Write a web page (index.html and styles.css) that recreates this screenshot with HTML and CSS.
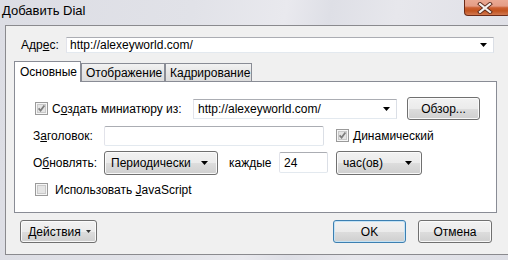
FILE: index.html
```html
<!DOCTYPE html>
<html lang="ru">
<head>
<meta charset="utf-8">
<title>Добавить Dial</title>
<link rel="stylesheet" href="styles.css">
</head>
<body>
<div class="window">
  <div class="titlebar">
    <span class="title">Добавить Dial</span>
    <div class="close">
      <svg width="16" height="12" viewBox="0 0 16 12">
        <path d="M3 2 L13 10 M13 2 L3 10" stroke="#5b2a1c" stroke-width="4" stroke-linecap="square" fill="none"/>
        <path d="M3 2 L13 10 M13 2 L3 10" stroke="#f4f1ee" stroke-width="2.2" stroke-linecap="square" fill="none"/>
      </svg>
    </div>
  </div>
  <div class="frame">
    <div class="client">
      <div class="addr-row">
        <span class="addr-label">Адр<u>е</u>с:</span>
        <div class="edit-combo addr-input">
          <span class="val">http://alexeyworld.com/</span>
          <svg class="arrow" width="7" height="4" viewBox="0 0 7 4"><path d="M0 0H7L3.5 4Z" fill="#000"/></svg>
        </div>
      </div>
      <div class="tabs">
        <div class="tab active">Основные</div>
        <div class="tab t2">Отображение</div>
        <div class="tab t3">Кадрирование</div>
      </div>
      <div class="panel">
        <div class="row">
          <span class="check"><svg width="13" height="13" viewBox="0 0 13 13"><rect x="0.5" y="0.5" width="12" height="12" fill="#f6f6f6" stroke="#9a9a9a"/><rect x="2.5" y="2.5" width="8" height="8" fill="#e4e4e4" stroke="#c9c9c9"/><path d="M3.6 6.4 L5.6 8.6 L9.4 3.4" stroke="#7d7d7d" stroke-width="1.7" fill="none"/></svg></span>
          <span class="cb-label thumb-label">С<u>о</u>здать миниатюру из:</span>
          <div class="edit-combo thumb-input">
            <span class="val">http://alexeyworld.com/</span>
            <svg class="arrow" width="7" height="4" viewBox="0 0 7 4"><path d="M0 0H7L3.5 4Z" fill="#000"/></svg>
          </div>
          <button class="btn browse">Обзор...</button>
        </div>
        <div class="row">
          <span class="lbl">З<u>а</u>головок:</span>
          <div class="edit title-input"></div>
          <span class="check dyn-check"><svg width="13" height="13" viewBox="0 0 13 13"><rect x="0.5" y="0.5" width="12" height="12" fill="#f6f6f6" stroke="#9a9a9a"/><rect x="2.5" y="2.5" width="8" height="8" fill="#e4e4e4" stroke="#c9c9c9"/><path d="M3.6 6.4 L5.6 8.6 L9.4 3.4" stroke="#7d7d7d" stroke-width="1.7" fill="none"/></svg></span>
          <span class="cb-label"><u>Д</u>инамический</span>
        </div>
        <div class="row">
          <span class="lbl">О<u>б</u>новлять:</span>
          <button class="btn combo period">Периодически<svg class="arrow" width="7" height="4" viewBox="0 0 7 4"><path d="M0 0H7L3.5 4Z" fill="#000"/></svg></button>
          <span class="every">каждые</span>
          <div class="edit num-input">24</div>
          <button class="btn combo unit">час(ов)<svg class="arrow" width="7" height="4" viewBox="0 0 7 4"><path d="M0 0H7L3.5 4Z" fill="#000"/></svg></button>
        </div>
        <div class="row">
          <span class="check"><svg width="13" height="13" viewBox="0 0 13 13"><rect x="0.5" y="0.5" width="12" height="12" fill="#f6f6f6" stroke="#9a9a9a"/><rect x="2.5" y="2.5" width="8" height="8" fill="#e4e4e4" stroke="#c9c9c9"/></svg></span>
          <span class="cb-label js-label">Использовать <u>J</u>avaScript</span>
        </div>
      </div>
      <div class="buttons">
        <button class="btn actions">Действия<svg class="small-arrow" width="5" height="3" viewBox="0 0 5 3"><path d="M0 0H5L2.5 3Z" fill="#333"/></svg></button>
        <div class="spacer"></div>
        <button class="btn default ok">OK</button>
        <button class="btn cancel">Отмена</button>
      </div>
    </div>
  </div>
</div>
</body>
</html>
```

FILE: styles.css
```css
html, body {
  margin: 0;
  padding: 0;
  width: 508px;
  height: 260px;
  overflow: hidden;
}

body {
  font-family: "Liberation Sans", Arial, sans-serif;
  font-size: 12px;
  color: #000;
  background: linear-gradient(100deg, #dcdde4 0%, #e1e2e8 35%, #e9e9ee 52%, #dedfe6 60%, #e7e7ec 72%, #dddee5 100%);
}

.window {
  width: 508px;
  height: 260px;
  display: flex;
  flex-direction: column;
}

.titlebar {
  height: 25px;
  flex: none;
  display: flex;
  justify-content: space-between;
  align-items: flex-start;
  overflow: hidden;
}

.title {
  padding-left: 2px;
  padding-top: 3px;
  font-size: 13px;
  line-height: 16px;
  color: #000;
}

.close {
  width: 46px;
  height: 16px;
  margin-right: -2px;
  box-sizing: border-box;
  border: 1px solid #6b2a17;
  border-top: none;
  border-radius: 0 0 4px 4px;
  background: linear-gradient(#eaa993 0%, #e49d86 40%, #cc5f31 52%, #c1531f 72%, #d27951 100%);
  display: flex;
  justify-content: center;
  align-items: center;
  padding-right: 4px;
}

.frame {
  flex: 1;
  padding-left: 5px;
  padding-bottom: 5px;
  display: flex;
}

.client {
  flex: 1;
  background: #f0f0f0;
  border: 1px solid #8a8a8e;
  border-right: none;
  display: flex;
  flex-direction: column;
  padding: 11px 11px 10px 8px;
}

/* address row */
.addr-row {
  display: flex;
  align-items: center;
  height: 16px;
  padding-left: 7px;
  padding-right: 3px;
}

.addr-label {
  width: 45px;
  flex: none;
}

.edit-combo {
  box-sizing: border-box;
  background: #fff;
  border: 1px solid;
  border-color: #abadb3 #dbdfe6 #e3e9ef #e2e3ea;
  display: flex;
  align-items: center;
  padding-left: 3px;
  padding-right: 6px;
}

.edit-combo .val {
  flex: 1;
}

.addr-input {
  flex: 1;
  height: 16px;
}

.arrow {
  flex: none;
}

/* tabs */
.tabs {
  display: flex;
  align-items: flex-end;
  margin-top: 8px;
  margin-bottom: -1px;
  position: relative;
  z-index: 1;
}

.tab {
  box-sizing: border-box;
  height: 18px;
  margin-bottom: 1px;
  border: 1px solid #898c95;
  border-bottom: none;
  background: linear-gradient(#f2f2f2, #e6e6e6 50%, #dcdcdc);
  padding: 2px 0 0 4px;
  line-height: 15px;
}

.tab.active {
  width: 67px;
  height: 21px;
  margin-bottom: 0;
  background: #fff;
  padding-top: 3px;
  padding-left: 5px;
}

.tab.t2 {
  width: 84px;
}

.tab.t3 {
  width: 87px;
}

/* panel */
.panel {
  box-sizing: border-box;
  height: 132px;
  background: #fff;
  border: 1px solid #898c95;
  display: flex;
  flex-direction: column;
  gap: 4px;
  padding: 15px 0 0 0;
}

.row {
  height: 23px;
  display: flex;
  align-items: center;
}

.check {
  width: 13px;
  height: 13px;
  flex: none;
  margin-left: 20px;
  display: flex;
}

.check svg {
  display: block;
}

.cb-label {
  margin-left: 4px;
}

.thumb-label {
  width: 141px;
  flex: none;
}

.js-label {
  margin-left: 7px;
}

.thumb-input {
  width: 204px;
  height: 20px;
  flex: none;
  padding-left: 4px;
}

.lbl {
  width: 71px;
  flex: none;
  margin-left: 18px;
}

.edit {
  box-sizing: border-box;
  background: #fff;
  border: 1px solid;
  border-color: #abadb3 #dbdfe6 #e3e9ef #e2e3ea;
  border-radius: 2px;
  display: flex;
  align-items: center;
  padding-left: 3px;
}

.title-input {
  width: 220px;
  height: 20px;
  flex: none;
}

.dyn-check {
  margin-left: 12px;
}

.num-input {
  width: 49px;
  height: 21px;
  flex: none;
  padding-left: 4px;
}

.every {
  width: 50px;
  flex: none;
  margin-left: 11px;
}

/* buttons */
.btn {
  box-sizing: border-box;
  font-family: inherit;
  font-size: 12px;
  color: #000;
  border: 1px solid #707070;
  border-radius: 3px;
  background: linear-gradient(#f2f2f2 0%, #ebebeb 50%, #dddddd 51%, #cfcfcf 100%);
  box-shadow: inset 0 0 0 1px rgba(252, 252, 252, 0.9);
  padding: 0;
  margin: 0;
  height: 23px;
  display: flex;
  align-items: center;
  justify-content: center;
  flex: none;
}

.browse {
  width: 73px;
  margin-left: 10px;
}

.combo {
  justify-content: space-between;
  padding: 0 9px 0 6px;
  height: 24px;
}

.period {
  width: 114px;
}

.unit {
  width: 86px;
  margin-left: 8px;
}

.buttons {
  display: flex;
  align-items: center;
  margin-top: 7px;
  padding-left: 6px;
  padding-right: 5px;
}

.spacer {
  flex: 1;
}

.actions {
  width: 77px;
  gap: 5px;
  padding-left: 2px;
}

.small-arrow {
  flex: none;
}

.ok {
  width: 73px;
}

.default {
  border-color: #3c7fb1;
  box-shadow: inset 0 0 0 1px #c3e2f5;
}

.cancel {
  width: 74px;
  margin-left: 12px;
}

u {
  text-decoration: underline;
  text-underline-offset: 1px;
}
```
